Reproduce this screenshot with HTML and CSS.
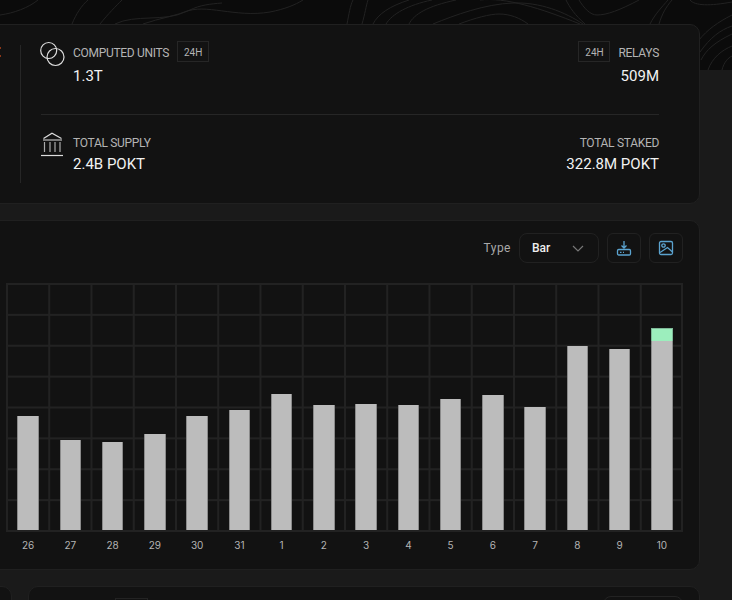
FILE: index.html
```html
<!DOCTYPE html>
<html lang="en">
<head>
<meta charset="utf-8">
<title>Network overview</title>
<link rel="stylesheet" href="styles.css">
</head>
<body>
<header class="hero">
  <svg class="contours" width="732" height="70" viewBox="0 0 732 70" fill="none">
    <path d="M0 15C14 13 28 8 38 0M72 24C76 14 82 5 88 0M100 24C108 14 116 6 122 0M115 24C135 14 165 22 185 12C205 3 235 18 270 12C285 9 295 5 303 0M143 24C160 18 176 16 190 10C200 5 210 4 222 3M347 24C349 14 350 6 353 0M362 24C365 14 366 6 368 0"/>
    <path d="M373 24C378 14 390 6 409 0M386 24C392 14 408 5 432 0M409 24C414 14 428 6 456 0M433 24C455 15 485 4 513 3C540 2 565 12 583 24M459 24C475 18 490 14 499 14C510 14 520 18 528 24M480 0C505 -3 540 8 580 24M579 0C584 8 590 15 597 15C607 15 620 10 639 0M566 0C570 8 575 15 585 24M650 24C655 14 662 7 668 0M672 0C666 7 662 14 659 24"/>
    <path d="M699 40C707 30 718 22 732 15M700 52C710 38 720 30 732 26M701 60C706 50 715 42 732 34M708 70C712 58 722 50 732 46M722 70C724 62 728 58 732 56M690 0C695 6 710 6 732 2"/>
  </svg>
</header>
<main class="page">
  <section class="card stats">
    <div class="stats-lead"><span class="peek"></span></div>
    <div class="stats-body">
      <div class="stat-row stat-row-top">
        <div class="stat">
          <svg class="stat-icon" width="26" height="27" viewBox="0 0 26 27" fill="none">
            <circle cx="7.700" cy="9.500" r="8"/>
            <circle cx="14.500" cy="16" r="8.500"/>
          </svg>
          <div>
            <div class="stat-head"><span class="stat-label">COMPUTED UNITS</span><span class="badge">24H</span></div>
            <div class="stat-value">1.3T</div>
          </div>
        </div>
        <div class="stat stat-end">
          <div>
            <div class="stat-head"><span class="badge">24H</span><span class="stat-label">RELAYS</span></div>
            <div class="stat-value">509M</div>
          </div>
        </div>
      </div>
      <div class="stat-row">
        <div class="stat">
          <svg class="stat-icon stat-icon-bank" width="26" height="28" viewBox="0 0 26 28" fill="none">
            <path class="bank-roof" d="M2.500 9.500 11 4.200 20.500 9.500M2 11H21"/>
            <path class="bank-cols" d="M3.500 13V23M9 13V23M14 13V23M19 13V23"/>
            <path class="bank-base" d="M0 26.500H22"/>
          </svg>
          <div>
            <div class="stat-label stat-label-line">TOTAL SUPPLY</div>
            <div class="stat-value stat-value-tight">2.4B POKT</div>
          </div>
        </div>
        <div class="stat stat-end">
          <div>
            <div class="stat-label stat-label-line">TOTAL STAKED</div>
            <div class="stat-value stat-value-tight">322.8M POKT</div>
          </div>
        </div>
      </div>
    </div>
  </section>

  <section class="card chart">
    <div class="toolbar">
      <span class="type-label">Type</span>
      <div class="select"><span>Bar</span>
        <svg width="12" height="7" viewBox="0 0 12 7" fill="none"><path d="M1 1l5 5 5-5"/></svg>
      </div>
      <button class="icon-btn" type="button" aria-label="Download data">
        <svg width="16" height="16" viewBox="0 0 16 16" fill="none">
          <path d="M8 1V7.500M5.500 5.500 8 8l2.500-2.500"/>
          <rect x="1.500" y="9.500" width="13" height="5.500" rx="1.200"/>
          <path d="M4 12.300H5.500M7 12.300H8"/>
        </svg>
      </button>
      <button class="icon-btn" type="button" aria-label="Download image">
        <svg width="16" height="16" viewBox="0 0 16 16" fill="none">
          <rect x="1.500" y="1.500" width="13" height="13" rx="1.500"/>
          <circle cx="5.500" cy="5.500" r="1.700"/>
          <path d="M2 12.500 9.500 7.500 14.500 12"/>
        </svg>
      </button>
    </div>
    <div class="plot">
      <div class="col"><div class="bar" style="height:114px"></div></div>
      <div class="col"><div class="bar" style="height:90px"></div></div>
      <div class="col"><div class="bar" style="height:88px"></div></div>
      <div class="col"><div class="bar" style="height:96px"></div></div>
      <div class="col"><div class="bar" style="height:114px"></div></div>
      <div class="col"><div class="bar" style="height:120px"></div></div>
      <div class="col"><div class="bar" style="height:136px"></div></div>
      <div class="col"><div class="bar" style="height:125px"></div></div>
      <div class="col"><div class="bar" style="height:126px"></div></div>
      <div class="col"><div class="bar" style="height:125px"></div></div>
      <div class="col"><div class="bar" style="height:131px"></div></div>
      <div class="col"><div class="bar" style="height:135px"></div></div>
      <div class="col"><div class="bar" style="height:123px"></div></div>
      <div class="col"><div class="bar" style="height:184px"></div></div>
      <div class="col"><div class="bar" style="height:181px"></div></div>
      <div class="col"><div class="bar bar-new" style="height:13px"></div><div class="bar" style="height:189px"></div></div>
    </div>
    <div class="ticks">
      <span>26</span><span>27</span><span>28</span><span>29</span><span>30</span><span>31</span><span>1</span><span>2</span><span>3</span><span>4</span><span>5</span><span>6</span><span>7</span><span>8</span><span>9</span><span>10</span>
    </div>
  </section>

  <div class="lower">
    <section class="card lower-side"></section>
    <section class="card lower-main">
      <span class="lower-badge"></span>
      <span class="lower-select"></span>
    </section>
  </div>
</main>
</body>
</html>
```
FILE: styles.css
```css
* { box-sizing: border-box; }
html, body { margin: 0; height: 600px; overflow: hidden; }
body {
  background: #1a1a1a;
  color: #e8e8e8;
  font-family: Roboto, "Liberation Sans", sans-serif;
}
.hero { height: 70px; background: #0b0b0b; }
.contours { display: block; }
.contours path { stroke: #222; stroke-width: 1; }
.page {
  position: relative;
  width: 760px;
  height: 576px;
  overflow: hidden;
  margin: -46px 0 0 -60px;
  display: flex;
  flex-direction: column;
  gap: 16px;
}
.card {
  background: #121212;
  border: 1px solid #202020;
  border-radius: 10px;
}
.stats { display: flex; flex: none; height: 180px; padding: 20px 40px 20px 0; }
.stats-lead {
  width: 80px;
  flex: none;
  border-right: 1px solid #262626;
  position: relative;
}
.peek {
  position: absolute;
  right: 19px;
  top: 2px;
  width: 1px;
  height: 10px;
  border-top: 2px solid #8c3718;
  border-bottom: 2px solid #8c3718;
}
.stats-body { flex: 1; padding-left: 20px; margin-top: -4px; }
.stat-row { display: flex; justify-content: space-between; padding-top: 20px; }
.stat-row-top { height: 74px; padding-top: 0; border-bottom: 1px solid #262626; }
.stat { display: flex; gap: 6px; }
.stat-end { text-align: right; }
.stat-icon { flex: none; display: block; overflow: visible; }
.stat-icon-bank { margin-top: -6px; }
.stat-icon circle { stroke: #ddd; stroke-width: 1.200; }
.bank-roof, .bank-base { stroke: #ddd; stroke-width: 1.200; }
.bank-cols { stroke: #aaa; stroke-width: 1.200; }
.stat-head { display: flex; align-items: center; gap: 8px; height: 21px; }
.stat-end .stat-head { justify-content: flex-end; }
.stat-head .stat-label { padding-top: 2px; }
.stat-label { font-size: 12px; color: #b4b4b4; letter-spacing: -0.3px; }
.stat-label-line { line-height: 16px; }
.stat-value { font-size: 15px; font-weight: 400; line-height: 18px; margin-top: 5px; color: #f2f2f2; }
.stat-value-tight { margin-top: 4px; }
.badge {
  display: flex;
  align-items: center;
  justify-content: center;
  width: 32px;
  height: 21px;
  padding-top: 2px;
  border: 1px solid #262626;
  font-size: 10px;
  color: #b4b4b4;
}
.chart { flex: none; height: 350px; padding: 12px 16px 0 65px; }
.toolbar { display: flex; justify-content: flex-end; align-items: center; gap: 8px; height: 30px; }
.type-label { font-size: 12px; color: #a9a9a9; letter-spacing: 0.5px; }
.select {
  width: 80px;
  height: 30px;
  border: 1px solid #212121;
  border-radius: 8px;
  display: flex;
  align-items: center;
  justify-content: space-between;
  padding: 0 14px 0 12px;
  font-size: 12px;
  font-weight: 500;
  color: #eee;
}
.select path { stroke: #777; stroke-width: 1.200; }
.icon-btn {
  width: 34px;
  height: 30px;
  padding: 0;
  background: none;
  border: 1px solid #212121;
  border-radius: 6px;
  display: flex;
  align-items: center;
  justify-content: center;
}
.icon-btn svg * { stroke: #5ba3cf; stroke-width: 1.300; }
.plot {
  margin-top: 20px;
  height: 249px;
  display: flex;
  padding: 0 0 2px 1px;
  background-image:
    linear-gradient(#222, #222),
    linear-gradient(#222, #222),
    linear-gradient(to right, #222 2px, transparent 2px),
    linear-gradient(to bottom, #222 2px, transparent 2px);
  background-size: 2px 100%, 100% 2px, 42.250px 100%, 100% 30.875px;
  background-position: right top, left bottom, left top, left top;
  background-repeat: no-repeat, no-repeat, repeat, repeat;
}
.col { flex: 1; display: flex; flex-direction: column; align-items: center; justify-content: flex-end; }
.bar { width: 21.500px; background: #bcbcbc; border: solid #8a8a8a; border-width: 0 1px; }
.bar-new { background: #9ceebd; border: 1px solid #7fb898; border-bottom: 0; }
.ticks { display: flex; margin-top: 7px; padding-left: 1px; font-family: Inter, sans-serif; font-size: 10px; color: #b4b4b4; }
.ticks span { flex: 1; text-align: center; }
.lower { display: flex; flex: none; gap: 16px; }
.lower-side { width: 72px; height: 100px; flex: none; }
.lower-main { flex: 1; height: 100px; display: flex; justify-content: space-between; padding: 9px 16px 0 86px; }
.lower-badge { width: 33px; height: 30px; border: 1px solid #232323; margin-top: 2px; }
.lower-select { width: 80px; height: 30px; border: 1px solid #232323; border-radius: 8px; }
```
